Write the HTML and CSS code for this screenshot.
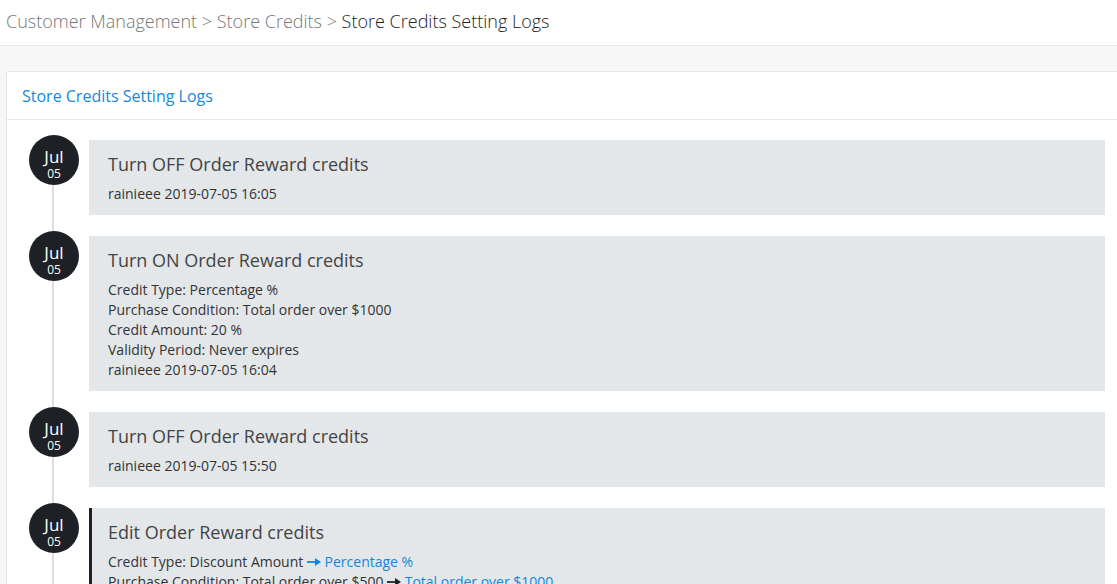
FILE: index.html
```html
<!DOCTYPE html>
<html>
<head>
<meta charset="utf-8">
<link rel="stylesheet" href="styles.css">
</head>
<body>
<div class="topbar">
  <span class="crumb">Customer Management &gt; Store Credits &gt; </span><span class="crumb current">Store Credits Setting Logs</span>
</div>
<div class="main">
  <div class="card">
    <div class="card-header">Store Credits Setting Logs</div>
    <div class="timeline">
      <div class="item">
        <div class="date"><span class="month">Jul</span><span class="day">05</span></div>
        <div class="box">
          <div class="title">Turn OFF Order Reward credits</div>
          <div class="meta">
            <div>rainieee 2019-07-05 16:05</div>
          </div>
        </div>
      </div>
      <div class="item">
        <div class="date"><span class="month">Jul</span><span class="day">05</span></div>
        <div class="box">
          <div class="title">Turn ON Order Reward credits</div>
          <div class="meta">
            <div>Credit Type: Percentage %</div>
            <div>Purchase Condition: Total order over $1000</div>
            <div>Credit Amount: 20 %</div>
            <div>Validity Period: Never expires</div>
            <div>rainieee 2019-07-05 16:04</div>
          </div>
        </div>
      </div>
      <div class="item">
        <div class="date"><span class="month">Jul</span><span class="day">05</span></div>
        <div class="box">
          <div class="title">Turn OFF Order Reward credits</div>
          <div class="meta">
            <div>rainieee 2019-07-05 15:50</div>
          </div>
        </div>
      </div>
      <div class="item">
        <div class="date"><span class="month">Jul</span><span class="day">05</span></div>
        <div class="box active">
          <div class="title">Edit Order Reward credits</div>
          <div class="meta">
            <div>Credit Type: Discount Amount <svg class="arrow blue-arrow" width="14" height="8" viewBox="0 0 14 8"><path d="M0 3.1h9v1.8H0z"/><path d="M8 0l6 4-6 4z"/></svg> <span class="blue">Percentage %</span></div>
            <div>Purchase Condition: Total order over $500 <svg class="arrow" width="14" height="8" viewBox="0 0 14 8"><path d="M0 3.1h9v1.8H0z"/><path d="M8 0l6 4-6 4z"/></svg> <span class="blue">Total order over $1000</span></div>
            <div>Credit Amount: 20 %</div>
            <div>Validity Period: Never expires</div>
            <div>rainieee 2019-07-05 15:49</div>
          </div>
        </div>
      </div>
    </div>
  </div>
</div>
</body>
</html>
```
FILE: styles.css
```css
html, body {
  margin: 0;
  padding: 0;
}
body {
  font-family: "Open Sans", "Liberation Sans", sans-serif;
  background: #f7f7f7;
  color: #333;
  overflow: hidden;
  height: 584px;
}
.topbar {
  background: #fff;
  border-bottom: 1px solid #e6e6e6;
  display: flex;
  align-items: center;
  padding-left: 6px;
  font-size: 18px;
  font-weight: 300;
  box-sizing: border-box;
  height: 46px;
  padding-bottom: 4px;
  white-space: pre;
}
.crumb {
  color: #777;
}
.crumb.current {
  color: #222;
}
.main {
  padding: 25px 0 0 6px;
}
.card {
  background: #fff;
  border: 1px solid #e6e6e6;
  border-right: none;
  border-radius: 3px 0 0 0;
  height: 600px;
}
.card-header {
  height: 47px;
  border-bottom: 1px solid #e6e6e6;
  display: flex;
  align-items: center;
  padding-left: 15px;
  color: #1589dc;
  font-size: 16px;
}
.timeline {
  position: relative;
  padding: 20px 12px 0 22px;
}
.timeline::before {
  content: "";
  position: absolute;
  left: 45px;
  top: 60px;
  bottom: 0;
  width: 2px;
  background: #dcdcdc;
}
.item {
  display: flex;
  align-items: flex-start;
  gap: 10px;
  margin-bottom: 21px;
  position: relative;
}
.date {
  width: 50px;
  height: 50px;
  border-radius: 50%;
  background: #1d2126;
  color: #fff;
  display: flex;
  flex-direction: column;
  align-items: center;
  justify-content: center;
  margin-top: -5px;
  padding-top: 9px;
  box-sizing: border-box;
  flex-shrink: 0;
  position: relative;
  z-index: 1;
}
.month {
  font-size: 17px;
  line-height: 17px;
}
.day {
  font-size: 12px;
  line-height: 17px;
}
.box {
  flex: 1;
  background: #e3e7ea;
  padding: 12px 19px 11px;
}
.box.active {
  border-left: 3px solid #1d2126;
  padding-left: 16px;
}
.title {
  font-size: 18px;
  line-height: 24px;
  color: #444;
  margin-bottom: 8px;
}
.meta {
  font-size: 14px;
  line-height: 20px;
  color: #333;
}
.blue {
  color: #0d87df;
}
.arrow {
  fill: #222;
  vertical-align: 1px;
}
.arrow.blue-arrow {
  fill: #0d87df;
}
```
